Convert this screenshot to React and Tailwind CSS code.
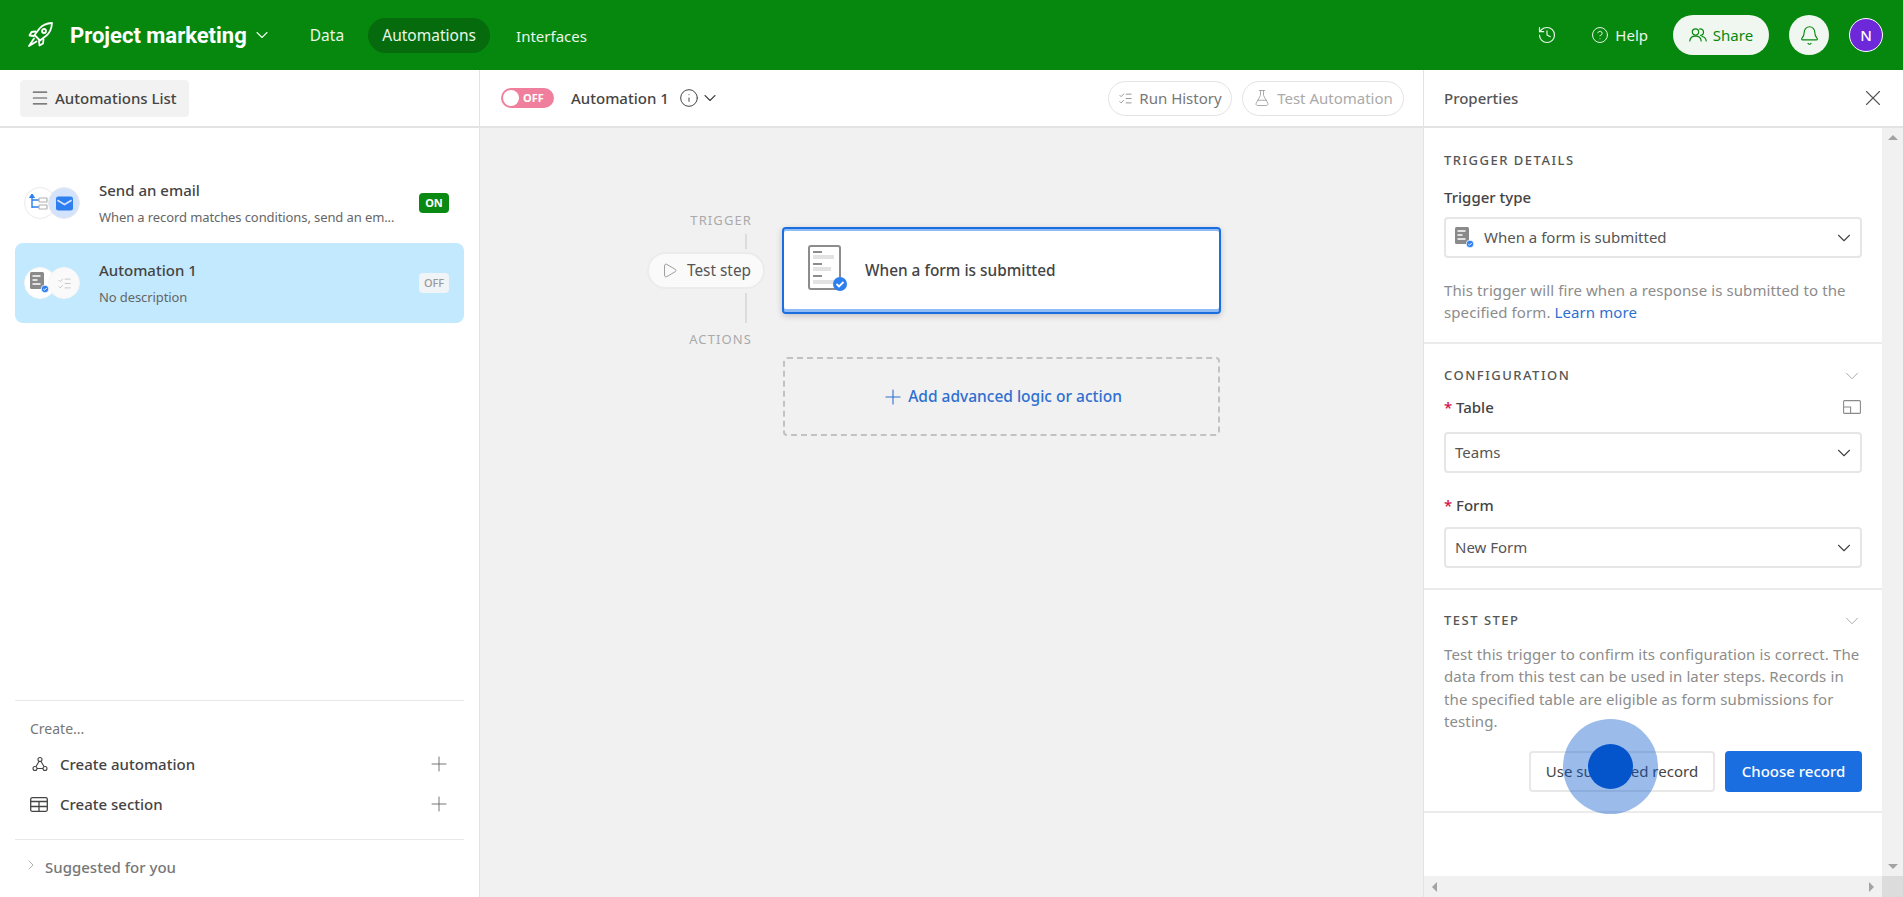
import React from 'react';
import {
  Bell,
  ChevronDown,
  ChevronRight,
  CircleHelp,
  FlaskConical,
  History,
  Info,
  ListChecks,
  Menu,
  Play,
  Plus,
  X,
} from 'lucide-react';

const font = { fontFamily: '"Noto Sans", "Open Sans", sans-serif' };

const Rocket = () => (
  <svg width="28" height="28" viewBox="0 0 28 28" fill="none" stroke="white" strokeWidth="1.8" strokeLinejoin="round" strokeLinecap="round">
    <path d="M26 2c-5 .3-9.500 2-12.500 5.500L8.500 14l5.500 5.500 6.500-5C24 11.500 25.700 7 26 2Z" />
    <circle cx="18" cy="10" r="2" />
    <path d="M9.500 10.500 5.500 11 3.500 14.500 8 15" />
    <path d="M17.500 18.500 17 22.500 13.500 24.500 13 20" />
    <path d="M8 17.500 3 25l7.500-4.500" />
  </svg>
);

const ShareIcon = () => (
  <svg width="18" height="14" viewBox="0 0 18 14" fill="none" stroke="#06880f" strokeWidth="1.200" strokeLinecap="round">
    <circle cx="6.500" cy="4" r="3.200" />
    <path d="M.8 13c.3-3 2.500-4.800 5.700-4.800s5.400 1.800 5.700 4.800" />
    <path d="M10.500 1c2-.6 4 .8 4 3s-1.500 3.300-3 3.300" />
    <path d="M13 8.500c2.400.4 3.900 2 4.200 4.500" />
  </svg>
);

const TableIcon = () => (
  <svg width="18" height="15" viewBox="0 0 18 15" fill="none" stroke="#444" strokeWidth="1.300">
    <rect x="0.700" y="0.700" width="16.600" height="13.600" rx="1.500" />
    <path d="M.7 4.500h16.600M.7 9.500h16.600M9 4.500v9.800" />
  </svg>
);

// small filled form icon with a blue check badge
const FormSmall = () => (
  <svg width="20" height="22" viewBox="0 0 20 22" className="shrink-0">
    <rect x="0" y="0" width="14" height="17" rx="1.500" fill="#8a8a8a" />
    <path d="M2.500 4h8M2.500 8h5M2.500 12h8" stroke="#fff" strokeWidth="1.600" />
    <circle cx="15" cy="17" r="3.800" fill="#2d7ff0" stroke="#fff" strokeWidth="0.800" />
    <path d="M13.300 17l1.200 1.200 2.200-2.200" stroke="#fff" strokeWidth="1" fill="none" />
  </svg>
);

const FormLarge = () => (
  <svg width="42" height="52" viewBox="0 0 42 52" className="shrink-0">
    <rect x="1" y="1" width="31" height="43" rx="2" fill="#fff" stroke="#8c8c8c" strokeWidth="2" />
    <path d="M5 7h9M5 19h9M5 31h9" stroke="#8c8c8c" strokeWidth="2" />
    <path d="M5 12h21M5 24h18M5 37h21" stroke="#e2e2e2" strokeWidth="4" />
    <circle cx="32" cy="39" r="7" fill="#2d7ff0" />
    <path d="M28.500 39l2.500 2.500 4.500-4.500" stroke="#fff" strokeWidth="1.800" fill="none" />
  </svg>
);

const BranchIcon = () => (
  <svg width="24" height="22" viewBox="0 0 24 22" fill="none">
    <path d="M4 5v11M4 8h7M4 15h7" stroke="#2d7ff0" strokeWidth="1.400" />
    <path d="M1.500 5.500 4 2l2.500 3.500Z" fill="#2d7ff0" stroke="#2d7ff0" />
    <rect x="11" y="6" width="8" height="4" rx="0.500" stroke="#b0b0b0" strokeWidth="1.200" />
    <rect x="11" y="13" width="8" height="4" rx="0.500" stroke="#b0b0b0" strokeWidth="1.200" />
  </svg>
);

const MailIcon = () => (
  <svg width="17" height="15" viewBox="0 0 18 15">
    <rect width="18" height="15" rx="2.500" fill="#2d7ff0" />
    <path d="M1.500 4 9 8.500 16.500 4" stroke="#d3e3fd" strokeWidth="1.800" fill="none" />
  </svg>
);

const NodesIcon = () => (
  <svg width="16" height="16" viewBox="0 0 16 16" fill="none" stroke="#444" strokeWidth="1.100">
    <circle cx="8" cy="3.500" r="2" />
    <circle cx="3" cy="12.500" r="2" />
    <circle cx="13" cy="12.500" r="2" />
    <path d="M7 5.500 3.800 10.700M9 5.500l3.200 5.200M5 12.500h6" />
  </svg>
);

const PanelIcon = () => (
  <svg width="18" height="14" viewBox="0 0 18 14" fill="none" stroke="#8a8a8a" strokeWidth="1.100">
    <rect x="0.600" y="0.600" width="16.800" height="12.800" rx="1" />
    <path d="M.6 7h7v6.400" />
  </svg>
);

const AutomationRow = ({ left, right, title, desc, badge, selected }) => (
  <div className={`flex h-20 items-center rounded-lg pl-[9px] pr-[15px] ${selected ? 'bg-[#c2e9fd]' : ''}`}>
    <div className="flex w-[75px] shrink-0">
      {left}
      {right}
    </div>
    <div className="min-w-0 flex-1">
      <div className="text-[15px] leading-[22px] font-medium text-[#444]">{title}</div>
      <div className="mt-[5px] truncate text-[13px] leading-[22px] tracking-[-0.1px] text-[#666]">{desc}</div>
    </div>
    {badge}
  </div>
);

const Circle = ({ className, children }) => (
  <div className={`flex size-[32px] items-center justify-center rounded-full border border-[#ebebeb] ${className}`}>
    {children}
  </div>
);

const Sidebar = () => (
  <aside className="flex w-[480px] shrink-0 flex-col border-r border-[#e3e3e3] bg-white">
    <div className="flex h-[58px] shrink-0 items-center border-b-2 border-[#e3e3e3] pl-5">
      <div className="flex h-[37px] w-[169px] items-center gap-[5px] rounded bg-[#f2f2f2] pl-[10px] text-[15px] font-medium text-[#444]">
        <Menu size={20} strokeWidth={1.400} color="#555" />
        Automations List
      </div>
    </div>
    <div className="flex flex-1 flex-col px-[15px] pt-[35px]">
      <AutomationRow
        title="Send an email"
        desc="When a record matches conditions, send an em..."
        left={
          <Circle className="bg-white">
            <BranchIcon />
          </Circle>
        }
        right={
          <Circle className="-ml-[8px] border-[#d3e3fd] bg-[#d3e3fd]">
            <MailIcon />
          </Circle>
        }
        badge={
          <span className="flex h-5 w-[30px] shrink-0 items-center justify-center rounded-sm bg-[#0a8a12] text-[11px] font-bold text-white">
            ON
          </span>
        }
      />
      <AutomationRow
        selected
        title="Automation 1"
        desc="No description"
        left={
          <Circle className="border-[#f5f5f5] bg-white">
            <FormSmall />
          </Circle>
        }
        right={
          <Circle className="-ml-[8px] border-[#f5f5f5] bg-[#fafafa]">
            <ListChecks size={15} strokeWidth={1} color="#aaa" />
          </Circle>
        }
        badge={
          <span className="flex h-5 w-[30px] shrink-0 items-center justify-center rounded-sm bg-[#f0f4f6] text-[11px] font-medium text-[#999]">
            OFF
          </span>
        }
      />
      <div className="mt-auto border-t border-[#e8e8e8] pt-[17px] pb-[24px]">
        <div className="pl-[15px] text-[14px] leading-[22px] text-[#777]">Create...</div>
        <div className="mt-[13px] flex h-[22px] items-center pl-[17px] pr-[13px] text-[15px] font-medium text-[#444]">
          <NodesIcon />
          <span className="ml-[12px] flex-1">Create automation</span>
          <Plus size={24} strokeWidth={0.900} color="#666" />
        </div>
        <div className="mt-[18px] flex h-[22px] items-center pl-[15px] pr-[13px] text-[15px] font-medium text-[#444]">
          <TableIcon />
          <span className="ml-[12px] flex-1">Create section</span>
          <Plus size={24} strokeWidth={0.900} color="#666" />
        </div>
      </div>
      <div className="flex h-[58px] shrink-0 items-start gap-[6px] border-t border-[#e8e8e8] pt-[16px] pl-[8px] text-[15px] leading-[22px] font-medium text-[#777]">
        <ChevronRight size={16} strokeWidth={1} color="#888" className="mt-[1px]" />
        Suggested for you
      </div>
    </div>
  </aside>
);

const Canvas = () => (
  <section className="flex min-w-0 flex-1 flex-col">
    <div className="flex h-[58px] shrink-0 items-center border-b-2 border-[#e3e3e3] bg-white pl-[21px] pr-[19px]">
      <div className="flex h-5 w-[53px] items-center rounded-full bg-[#ef7f9c] pl-[2px]">
        <span className="size-4 rounded-full bg-white" />
        <span className="ml-[4px] text-[11px] font-bold text-white">OFF</span>
      </div>
      <span className="ml-[17px] text-[15px] font-medium text-[#444]">Automation 1</span>
      <Info size={20} strokeWidth={1.200} color="#444" className="ml-[10px]" />
      <ChevronDown size={20} strokeWidth={1.300} color="#444" className="ml-[1px]" />
      <div className="ml-auto flex h-[35px] w-[124px] items-center justify-center gap-[6px] rounded-full border border-[#e3e3e3] bg-white text-[15px] text-[#777]">
        <ListChecks size={15} strokeWidth={1.200} color="#777" />
        Run History
      </div>
      <div className="ml-[10px] flex h-[35px] w-[162px] items-center justify-center gap-[6px] rounded-full border border-[#e3e3e3] bg-white text-[15px] text-[#aaa]">
        <FlaskConical size={18} strokeWidth={1.100} color="#999" />
        Test Automation
      </div>
    </div>
    <div className="flex flex-1 bg-[#f1f1f1] pt-[82px] pl-[167px]">
      <div className="flex w-[118px] shrink-0 flex-col items-end">
        <div className="mr-[13px] text-[13px] leading-[20px] tracking-[1.100px] text-[#aaa]">TRIGGER</div>
        <div className="mr-[18px] mt-[4px] h-[15px] w-[2px] bg-[#dcdcdc]" />
        <div className="mt-[3px] flex h-[37px] w-[118px] items-center justify-center gap-[9px] rounded-full border-2 border-[#ebebeb] bg-[#fafafa] text-[15.400px] text-[#555]">
          <Play size={17} strokeWidth={1} color="#777" />
          Test step
        </div>
        <div className="mr-[18px] mt-[4px] h-[30px] w-[2px] bg-[#dcdcdc]" />
        <div className="mr-[13px] mt-[6px] text-[13px] leading-[20px] tracking-[1.100px] text-[#aaa]">ACTIONS</div>
      </div>
      <div className="ml-[17px] w-[439px] shrink-0">
        <div className="mt-[17px] flex h-[87px] items-center rounded border-2 border-[#1a6ee0] bg-white pl-[24px] shadow-[0_2px_6px_rgba(0,0,0,0.2),inset_0_2px_0_#8fbcf5,inset_0_-3px_0_#8fbcf5]">
          <FormLarge />
          <span className="ml-[15px] text-[15.400px] font-medium text-[#444]">When a form is submitted</span>
        </div>
        <div className="ml-px mt-[43px] flex h-[79px] w-[437px] items-center justify-center gap-[3px] rounded-sm border-2 border-dashed border-[#c2c2c2] text-[15.500px] font-medium text-[#2f6fd0]">
          <Plus size={24} strokeWidth={1.100} color="#2f6fd0" />
          Add advanced logic or action
        </div>
      </div>
    </div>
  </section>
);

const SelectBox = ({ children, className }) => (
  <div className={`flex h-[41px] items-center rounded border-2 border-[#e6e6e6] bg-white pr-[5px] text-[15px] text-[#555] ${className}`}>
    {children}
    <ChevronDown size={22} strokeWidth={1.200} color="#444" className="ml-auto" />
  </div>
);

const SectionHead = ({ children, chevron }) => (
  <div className="flex h-5 items-center justify-between text-[13px] font-medium tracking-[1.500px] text-[#555]">
    {children}
    {chevron && <ChevronDown size={22} strokeWidth={0.900} color="#999" className="-mr-px" />}
  </div>
);

const Properties = () => (
  <aside className="flex w-[480px] shrink-0 flex-col border-l border-[#e3e3e3] bg-white">
    <div className="flex h-[58px] shrink-0 items-center justify-between border-b-2 border-[#e3e3e3] pl-[20px] pr-[17px] text-[15px] font-medium text-[#555]">
      Properties
      <X size={26} strokeWidth={1} color="#555" />
    </div>
    <div className="flex min-h-0 flex-1">
      <div className="min-w-0 flex-1">
        <div className="h-[216px] border-b-2 border-[#ebebeb] px-[20px] pt-[23px]">
          <SectionHead>TRIGGER DETAILS</SectionHead>
          <div className="mt-[15px] text-[15px] leading-[22px] font-medium text-[#444]">Trigger type</div>
          <SelectBox className="mt-[9px] pl-[9px]">
            <FormSmall />
            <span className="ml-[9px]">When a form is submitted</span>
          </SelectBox>
          <p className="mt-[21px] text-[15px] leading-[22px] tracking-[0.1px] text-[#8c8c8c]">
            This trigger will fire when a response is submitted to the
            <br />
            specified form. <span className="text-[#2f6fd0]">Learn more</span>
          </p>
        </div>
        <div className="h-[246px] border-b-2 border-[#ebebeb] px-[20px] pt-[22px]">
          <SectionHead chevron>CONFIGURATION</SectionHead>
          <div className="mt-[10px] flex h-[22px] items-center text-[15px] font-medium text-[#444]">
            <span className="mr-[3px] w-[9px] text-[#d0104c]">*</span>
            Table
            <span className="ml-auto mr-[1px]">
              <PanelIcon />
            </span>
          </div>
          <SelectBox className="mt-[14px] pl-[9px]">Teams</SelectBox>
          <div className="mt-[21px] flex h-[22px] items-center text-[15px] font-medium text-[#444]">
            <span className="mr-[3px] w-[9px] text-[#d0104c]">*</span>
            Form
          </div>
          <SelectBox className="mt-[11px] pl-[9px]">New Form</SelectBox>
        </div>
        <div className="relative h-[223px] border-b-2 border-[#ebebeb] px-[20px] pt-[21px]">
          <SectionHead chevron>TEST STEP</SectionHead>
          <p className="mt-[12px] text-[15px] leading-[22.400px] tracking-[0.1px] text-[#8c8c8c]">
            Test this trigger to confirm its configuration is correct. The
            <br />
            data from this test can be used in later steps. Records in
            <br />
            the specified table are eligible as form submissions for
            <br />
            testing.
          </p>
          <div className="mt-[18px] flex justify-end gap-[10px]">
            <div className="flex h-[41px] w-[186px] items-center justify-center rounded border-2 border-[#e8e8e8] bg-white text-[15px] text-[#444]">
              Use submitted record
            </div>
            <div className="flex h-[41px] w-[137px] items-center justify-center rounded bg-[#1a6ee0] text-[15px] font-medium text-white">
              Choose record
            </div>
          </div>
          {/* click marker */}
          <div className="absolute left-[139px] top-[129px] flex size-[95px] items-center justify-center rounded-full bg-[#0455cc]/40">
            <div className="size-[45px] rounded-full bg-[#0455cc]" />
          </div>
        </div>
      </div>
      <div className="flex w-[21px] shrink-0 flex-col items-center justify-between bg-[#f1f1f1] py-[7px]">
        <span className="size-0 border-x-[5px] border-b-[5px] border-x-transparent border-b-[#a3a3a3]" />
        <span className="size-0 border-x-[5px] border-t-[5px] border-x-transparent border-t-[#a3a3a3]" />
      </div>
    </div>
    <div className="flex h-[21px] shrink-0 bg-[#f1f1f1]">
      <div className="flex flex-1 items-center justify-between px-[8px]">
        <span className="size-0 border-y-[5px] border-r-[5px] border-y-transparent border-r-[#a3a3a3]" />
        <span className="size-0 border-y-[5px] border-l-[5px] border-y-transparent border-l-[#a3a3a3]" />
      </div>
      <div className="w-[21px] bg-[#dcdcdc]" />
    </div>
  </aside>
);

const TopBar = () => (
  <header className="flex h-[70px] shrink-0 items-center bg-[#06880f] pl-[26px] pr-[20px] text-[#eaf6ea]">
    <Rocket />
    <span className="ml-[16px] font-['Roboto',sans-serif] text-[22px] font-bold text-white">Project marketing</span>
    <ChevronDown size={20} strokeWidth={1.300} className="ml-[5px]" />
    <span className="ml-[38px] pt-[2px] text-[15.500px]">Data</span>
    <span className="ml-[24px] flex h-[35px] w-[122px] items-center justify-center rounded-full bg-[#056b0c] pt-[2px] text-[15.500px]">
      Automations
    </span>
    <span className="ml-[26px] pt-[2px] text-[15px]">Interfaces</span>
    <History size={20} strokeWidth={1.400} className="ml-auto" />
    <CircleHelp size={18} strokeWidth={1.300} className="ml-[34px]" />
    <span className="ml-[6px] text-[15px]">Help</span>
    <span className="ml-[25px] flex h-10 w-[96px] items-center justify-center gap-[6px] rounded-full bg-[#f0f7f0] text-[15px] text-[#06880f]">
      <ShareIcon />
      Share
    </span>
    <span className="ml-[20px] flex size-10 items-center justify-center rounded-full bg-[#f0f7f0]">
      <Bell size={21} strokeWidth={1.300} color="#06880f" />
    </span>
    <span className="ml-[20px] flex size-[34px] items-center justify-center rounded-full border border-white bg-[#6d28d9] text-[15px] font-medium text-white">
      N
    </span>
  </header>
);

export default function App() {
  return (
    <div style={font} className="flex h-[897px] w-[1903px] flex-col overflow-hidden bg-white">
      <TopBar />
      <div className="flex min-h-0 flex-1">
        <Sidebar />
        <Canvas />
        <Properties />
      </div>
    </div>
  );
}
